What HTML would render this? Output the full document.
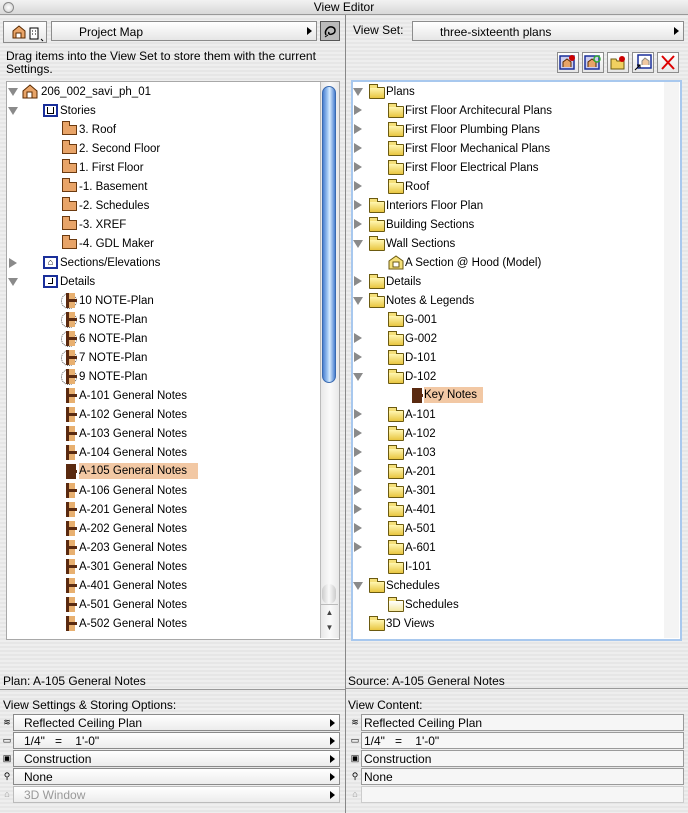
<!DOCTYPE html>
<html><head><meta charset="utf-8"><style>
*{box-sizing:border-box;margin:0;padding:0}
body{width:688px;height:813px;overflow:hidden;position:relative;font-family:"Liberation Sans",sans-serif;font-size:11.5px;color:#000;background:repeating-linear-gradient(#eeeeee 0 2px,#e6e6e6 2px 4px)}
.a{position:absolute}
.title{left:0;top:0;width:688px;height:15px;background:linear-gradient(#f2f2f2,#d8d8d8);border-bottom:1px solid #999;text-align:center;line-height:14px;font-size:12px}
.btn{background:linear-gradient(#fff,#e6e6e6);border:1px solid #8c8c8c}
.tree{background:#fff;border:1px solid #a8a8a8;overflow:hidden}
.r{position:absolute;height:19px;line-height:19px;padding-top:2px;white-space:nowrap}
.tri{position:absolute;width:0;height:0}
.td{border-left:5px solid transparent;border-right:5px solid transparent;border-top:8px solid #8a8a8a;margin-top:1px}
.tr{border-top:5px solid transparent;border-bottom:5px solid transparent;border-left:8px solid #8a8a8a;margin-top:1px}
.fold{position:absolute;width:16px;height:12px;background:linear-gradient(#fff6b0,#e8c640);border:1px solid #6b5a10;border-radius:1px}
.fold:before{content:"";position:absolute;left:-1px;top:-4px;width:7px;height:3px;background:#f5e07a;border:1px solid #6b5a10;border-bottom:none}
.story{position:absolute;width:15px;height:10px;background:#e8a468;border:1px solid #6b3a10;margin-top:1px}
.story:before{content:"";position:absolute;left:-1px;top:-5px;width:6px;height:4px;background:#e8a468;border:1px solid #6b3a10;border-bottom:none}
.det{position:absolute;width:10px;height:15px;border-left:3px solid #5a2a10;background:linear-gradient(90deg,#e8b070 0 6px,transparent 6px);margin-top:1px}
.det:after{content:"";position:absolute;left:0;top:6px;width:8px;height:3px;background:#5a2a10}
.circ{position:absolute;width:16px;height:16px;border:1px dotted #555;border-radius:50%;margin-top:1px}
.sel{background:#f2c8a4;padding-top:0}
.dd{position:absolute;height:17px;border:1px solid #8a8a8a;background:linear-gradient(#fff,#ececec);line-height:17px;padding-left:10px;font-size:12px}
.dd:after{content:"";position:absolute;right:4px;top:4px;border-top:4px solid transparent;border-bottom:4px solid transparent;border-left:5px solid #000}
.ro{position:absolute;height:17px;border:1px solid #9a9a9a;background:#f6f6f6;line-height:17px;padding-left:2px;font-size:12px}
.ic{position:absolute;font-size:9px;width:10px;text-align:center}
</style></head><body>
<div class="a title">View Editor</div>
<div class="a" style="left:3px;top:2px;width:11px;height:11px;border-radius:50%;border:1px solid #888;background:radial-gradient(#fff,#ccc)"></div>
<div class="a" style="left:345px;top:15px;width:1px;height:798px;background:#888"></div>

<div class="a btn" style="left:3px;top:21px;width:44px;height:22px"><svg width="40" height="20"><path d="M9 16V9l6-5 6 5v7z" fill="#e8a468" stroke="#5a2a00"/><rect x="12" y="11" width="5" height="5" fill="#fff" stroke="#5a2a00"/><rect x="26" y="6" width="8" height="11" fill="#fff" stroke="#000"/><path d="M28 9h1M31 9h1M28 12h1M31 12h1" stroke="#000"/><path d="M37 17l2 2" stroke="#000"/></svg></div>
<div class="a btn" style="left:51px;top:21px;width:266px;height:20px;line-height:20px;padding-left:27px;font-size:12px">Project Map<span style="position:absolute;right:4px;top:5px;border-top:4px solid transparent;border-bottom:4px solid transparent;border-left:5px solid #000"></span></div>
<div class="a" style="left:320px;top:21px;width:20px;height:20px;border:1px solid #555;background:#bbb"><svg width="18" height="18"><path d="M5 13c-2-4 2-9 6-8s4 6 0 7c-2 1-4 0-3-2" fill="none" stroke="#000" stroke-width="1.5"/><path d="M4 15l3-2" stroke="#000"/></svg></div>
<div class="a" style="left:6px;top:50px;width:336px;line-height:13px;font-size:12px">Drag items into the View Set to store them with the current Settings.</div>

<div class="a tree" style="left:6px;top:81px;width:334px;height:559px"></div>
<div class="a" style="left:320px;top:82px;width:19px;height:556px;background:repeating-linear-gradient(90deg,#e8e8e8,#fafafa 50%,#e8e8e8);border-left:1px solid #bbb"></div>
<div class="a" style="left:322px;top:86px;width:14px;height:297px;border-radius:7px;background:linear-gradient(90deg,#4a80d0,#a8cdf6 40%,#d8ecff 55%,#4a80d0);border:1px solid #3a6ab0"></div>
<div class="a" style="left:322px;top:584px;width:14px;height:20px;border-radius:7px;background:linear-gradient(90deg,#ccc,#fafafa,#ccc)"></div>
<div class="a" style="left:321px;top:604px;width:17px;height:32px;border-top:1px solid #bbb;font-size:8px;text-align:center;line-height:15px;color:#444">▲<br>▼</div>

<div class="tri td" style="left:8px;top:87px"></div>
<svg class="a" style="left:21px;top:84px" width="18" height="15"><path d="M2 14V7l7-6 7 6v7z" fill="#e8a468" stroke="#5a2a00"/><rect x="6" y="8" width="5" height="6" fill="#fff" stroke="#5a2a00"/></svg>
<div class="r" style="left:41px;top:81px">206_002_savi_ph_01</div>
<div class="tri td" style="left:8px;top:106px"></div>
<div class="a" style="left:43px;top:104px;width:15px;height:13px;border:2px solid #1a2f9a;background:#fff"><div style="position:absolute;left:2px;top:1px;width:7px;height:7px;border:1px solid #000;border-top:none"></div></div>
<div class="r" style="left:60px;top:100px">Stories</div>

<div class="story" style="left:62px;top:124px"></div><div class="r" style="left:79px;top:119px">3. Roof</div>
<div class="story" style="left:62px;top:143px"></div><div class="r" style="left:79px;top:138px">2. Second Floor</div>
<div class="story" style="left:62px;top:162px"></div><div class="r" style="left:79px;top:157px">1. First Floor</div>
<div class="story" style="left:62px;top:181px"></div><div class="r" style="left:79px;top:176px">-1. Basement</div>
<div class="story" style="left:62px;top:200px"></div><div class="r" style="left:79px;top:195px">-2. Schedules</div>
<div class="story" style="left:62px;top:219px"></div><div class="r" style="left:79px;top:214px">-3. XREF</div>
<div class="story" style="left:62px;top:238px"></div><div class="r" style="left:79px;top:233px">-4. GDL Maker</div>

<div class="tri tr" style="left:9px;top:257px"></div>
<div class="a" style="left:43px;top:256px;width:15px;height:13px;border:2px solid #1a2f9a;background:#fff;font-size:9px;line-height:9px;text-align:center">⌂</div>
<div class="r" style="left:60px;top:252px">Sections/Elevations</div>
<div class="tri td" style="left:8px;top:277px"></div>
<div class="a" style="left:43px;top:275px;width:15px;height:13px;border:2px solid #1a2f9a;background:#fff"><div style="position:absolute;left:3px;top:1px;width:5px;height:6px;border:1px solid #000;border-left:none;border-top:none"></div></div>
<div class="r" style="left:60px;top:271px">Details</div>

<div class="circ" style="left:61px;top:292px"></div><div class="det" style="left:66px;top:292px"></div><div class="r" style="left:79px;top:290px">10 NOTE-Plan</div>
<div class="circ" style="left:61px;top:311px"></div><div class="det" style="left:66px;top:311px"></div><div class="r" style="left:79px;top:309px">5 NOTE-Plan</div>
<div class="circ" style="left:61px;top:330px"></div><div class="det" style="left:66px;top:330px"></div><div class="r" style="left:79px;top:328px">6 NOTE-Plan</div>
<div class="circ" style="left:61px;top:349px"></div><div class="det" style="left:66px;top:349px"></div><div class="r" style="left:79px;top:347px">7 NOTE-Plan</div>
<div class="circ" style="left:61px;top:368px"></div><div class="det" style="left:66px;top:368px"></div><div class="r" style="left:79px;top:366px">9 NOTE-Plan</div>

<div class="det" style="left:66px;top:387px"></div><div class="r" style="left:79px;top:385px">A-101 General Notes</div>
<div class="det" style="left:66px;top:406px"></div><div class="r" style="left:79px;top:404px">A-102 General Notes</div>
<div class="det" style="left:66px;top:425px"></div><div class="r" style="left:79px;top:423px">A-103 General Notes</div>
<div class="det" style="left:66px;top:444px"></div><div class="r" style="left:79px;top:442px">A-104 General Notes</div>
<div class="det" style="left:66px;top:463px;background:#5a2a10"></div><div class="r sel" style="left:79px;top:463px;width:119px;height:16px;line-height:16px">A-105 General Notes</div>
<div class="det" style="left:66px;top:482px"></div><div class="r" style="left:79px;top:480px">A-106 General Notes</div>
<div class="det" style="left:66px;top:501px"></div><div class="r" style="left:79px;top:499px">A-201 General Notes</div>
<div class="det" style="left:66px;top:520px"></div><div class="r" style="left:79px;top:518px">A-202 General Notes</div>
<div class="det" style="left:66px;top:539px"></div><div class="r" style="left:79px;top:537px">A-203 General Notes</div>
<div class="det" style="left:66px;top:558px"></div><div class="r" style="left:79px;top:556px">A-301 General Notes</div>
<div class="det" style="left:66px;top:577px"></div><div class="r" style="left:79px;top:575px">A-401 General Notes</div>
<div class="det" style="left:66px;top:596px"></div><div class="r" style="left:79px;top:594px">A-501 General Notes</div>
<div class="det" style="left:66px;top:615px"></div><div class="r" style="left:79px;top:613px">A-502 General Notes</div>
<div class="a" style="left:7px;top:633px;width:312px;height:6px;background:#fff"></div>

<div class="a" style="left:353px;top:23px;font-size:12px">View Set:</div>
<div class="a btn" style="left:412px;top:21px;width:272px;height:20px;line-height:20px;padding-left:27px;font-size:12px">three-sixteenth plans<span style="position:absolute;right:4px;top:5px;border-top:4px solid transparent;border-bottom:4px solid transparent;border-left:5px solid #000"></span></div>
<div class="a btn" style="left:557px;top:52px;width:22px;height:21px"><svg width="20" height="19"><rect x="2" y="3" width="14" height="13" fill="#cce" stroke="#1a2f9a" stroke-width="1.5"/><path d="M5 14V9l4-3 4 3v5" fill="#e8a468" stroke="#5a2a00"/><circle cx="14" cy="5" r="3" fill="#c00"/></svg></div>
<div class="a btn" style="left:582px;top:52px;width:22px;height:21px"><svg width="20" height="19"><rect x="2" y="3" width="14" height="13" fill="#cce" stroke="#1a2f9a" stroke-width="1.5"/><path d="M5 14V9l4-3 4 3v5" fill="#e8a468" stroke="#5a2a00"/><circle cx="14" cy="6" r="3" fill="none" stroke="#3a3" stroke-width="1.5"/></svg></div>
<div class="a btn" style="left:607px;top:52px;width:22px;height:21px"><svg width="20" height="19"><path d="M3 6h5l1 2h7v8H3z" fill="#f0d060" stroke="#6b5a10"/><circle cx="14" cy="6" r="3" fill="#c00"/></svg></div>
<div class="a btn" style="left:632px;top:52px;width:22px;height:21px"><svg width="20" height="19"><rect x="5" y="2" width="13" height="13" fill="#fff" stroke="#1a2f9a" stroke-width="1.5"/><path d="M9 12V8l3-3 4 3v4" fill="#f0c8a0" stroke="#888"/><path d="M2 17l5-5M4 12h3v3" stroke="#000" fill="none"/></svg></div>
<div class="a btn" style="left:657px;top:52px;width:22px;height:21px"><svg width="20" height="19"><path d="M4 3l12 13M16 3L4 16" stroke="#d00" stroke-width="2"/></svg></div>

<div class="a tree" style="left:351px;top:80px;width:331px;height:561px;border:2px solid #a8c8ee"></div>
<div class="a" style="left:664px;top:82px;width:15px;height:556px;background:#f4f4f4"></div>

<div class="tri td" style="left:353px;top:87px"></div><div class="fold" style="left:369px;top:87px"></div><div class="r" style="left:386px;top:81px">Plans</div>
<div class="tri tr" style="left:354px;top:104px"></div><div class="fold" style="left:388px;top:106px"></div><div class="r" style="left:405px;top:100px">First Floor Architecural Plans</div>
<div class="tri tr" style="left:354px;top:123px"></div><div class="fold" style="left:388px;top:125px"></div><div class="r" style="left:405px;top:119px">First Floor Plumbing Plans</div>
<div class="tri tr" style="left:354px;top:142px"></div><div class="fold" style="left:388px;top:144px"></div><div class="r" style="left:405px;top:138px">First Floor Mechanical Plans</div>
<div class="tri tr" style="left:354px;top:161px"></div><div class="fold" style="left:388px;top:163px"></div><div class="r" style="left:405px;top:157px">First Floor Electrical Plans</div>
<div class="tri tr" style="left:354px;top:180px"></div><div class="fold" style="left:388px;top:182px"></div><div class="r" style="left:405px;top:176px">Roof</div>
<div class="tri tr" style="left:354px;top:199px"></div><div class="fold" style="left:369px;top:201px"></div><div class="r" style="left:386px;top:195px">Interiors Floor Plan</div>
<div class="tri tr" style="left:354px;top:218px"></div><div class="fold" style="left:369px;top:220px"></div><div class="r" style="left:386px;top:214px">Building Sections</div>
<div class="tri td" style="left:353px;top:239px"></div><div class="fold" style="left:369px;top:239px"></div><div class="r" style="left:386px;top:233px">Wall Sections</div>
<svg class="a" style="left:388px;top:255px" width="17" height="15"><path d="M1 6l7-5 7 5v8H1z" fill="#f5e07a" stroke="#6b5a10"/><rect x="5" y="7" width="6" height="5" fill="#fff" stroke="#6b5a10"/></svg><div class="r" style="left:405px;top:252px">A Section @ Hood (Model)</div>
<div class="tri tr" style="left:354px;top:275px"></div><div class="fold" style="left:369px;top:277px"></div><div class="r" style="left:386px;top:271px">Details</div>
<div class="tri td" style="left:353px;top:296px"></div><div class="fold" style="left:369px;top:296px"></div><div class="r" style="left:386px;top:290px">Notes &amp; Legends</div>
<div class="fold" style="left:388px;top:315px"></div><div class="r" style="left:405px;top:309px">G-001</div>
<div class="tri tr" style="left:354px;top:332px"></div><div class="fold" style="left:388px;top:334px"></div><div class="r" style="left:405px;top:328px">G-002</div>
<div class="tri tr" style="left:354px;top:351px"></div><div class="fold" style="left:388px;top:353px"></div><div class="r" style="left:405px;top:347px">D-101</div>
<div class="tri td" style="left:353px;top:372px"></div><div class="fold" style="left:388px;top:372px"></div><div class="r" style="left:405px;top:366px">D-102</div>
<div class="det" style="left:412px;top:387px;background:#5a2a10"></div><div class="r sel" style="left:424px;top:387px;width:59px;height:16px;line-height:16px">Key Notes</div>
<div class="tri tr" style="left:354px;top:408px"></div><div class="fold" style="left:388px;top:410px"></div><div class="r" style="left:405px;top:404px">A-101</div>
<div class="tri tr" style="left:354px;top:427px"></div><div class="fold" style="left:388px;top:429px"></div><div class="r" style="left:405px;top:423px">A-102</div>
<div class="tri tr" style="left:354px;top:446px"></div><div class="fold" style="left:388px;top:448px"></div><div class="r" style="left:405px;top:442px">A-103</div>
<div class="tri tr" style="left:354px;top:465px"></div><div class="fold" style="left:388px;top:467px"></div><div class="r" style="left:405px;top:461px">A-201</div>
<div class="tri tr" style="left:354px;top:484px"></div><div class="fold" style="left:388px;top:486px"></div><div class="r" style="left:405px;top:480px">A-301</div>
<div class="tri tr" style="left:354px;top:503px"></div><div class="fold" style="left:388px;top:505px"></div><div class="r" style="left:405px;top:499px">A-401</div>
<div class="tri tr" style="left:354px;top:522px"></div><div class="fold" style="left:388px;top:524px"></div><div class="r" style="left:405px;top:518px">A-501</div>
<div class="tri tr" style="left:354px;top:541px"></div><div class="fold" style="left:388px;top:543px"></div><div class="r" style="left:405px;top:537px">A-601</div>
<div class="fold" style="left:388px;top:562px"></div><div class="r" style="left:405px;top:556px">I-101</div>
<div class="tri td" style="left:353px;top:581px"></div><div class="fold" style="left:369px;top:581px"></div><div class="r" style="left:386px;top:575px">Schedules</div>
<div class="fold" style="left:388px;top:600px;background:linear-gradient(#fff,#f5e8a0)"></div><div class="r" style="left:405px;top:594px">Schedules</div>
<div class="fold" style="left:369px;top:619px"></div><div class="r" style="left:386px;top:613px">3D Views</div>

<div class="a" style="left:3px;top:674px;font-size:12px">Plan: A-105 General Notes</div>
<div class="a" style="left:348px;top:674px;font-size:12px">Source: A-105 General Notes</div>
<div class="a" style="left:0;top:689px;width:345px;height:1px;background:#999"></div>
<div class="a" style="left:346px;top:688px;width:342px;height:1px;background:#999"></div>
<div class="a" style="left:3px;top:698px;font-size:12px">View Settings &amp; Storing Options:</div>
<div class="a" style="left:348px;top:698px;font-size:12px">View Content:</div>

<div class="ic" style="left:2px;top:717px">≋</div><div class="dd" style="left:13px;top:714px;width:327px">Reflected Ceiling Plan</div>
<div class="ic" style="left:2px;top:735px">▭</div><div class="dd" style="left:13px;top:732px;width:327px">1/4"&nbsp;&nbsp;&nbsp;=&nbsp;&nbsp;&nbsp;&nbsp;1'-0"</div>
<div class="ic" style="left:2px;top:753px">▣</div><div class="dd" style="left:13px;top:750px;width:327px">Construction</div>
<div class="ic" style="left:2px;top:771px">⚲</div><div class="dd" style="left:13px;top:768px;width:327px">None</div>
<div class="ic" style="left:2px;top:789px;color:#999">⌂</div><div class="dd" style="left:13px;top:786px;width:327px;color:#999;border-color:#bbb">3D Window</div>

<div class="ic" style="left:350px;top:717px">≋</div><div class="ro" style="left:361px;top:714px;width:323px">Reflected Ceiling Plan</div>
<div class="ic" style="left:350px;top:735px">▭</div><div class="ro" style="left:361px;top:732px;width:323px">1/4"&nbsp;&nbsp;&nbsp;=&nbsp;&nbsp;&nbsp;&nbsp;1'-0"</div>
<div class="ic" style="left:350px;top:753px">▣</div><div class="ro" style="left:361px;top:750px;width:323px">Construction</div>
<div class="ic" style="left:350px;top:771px">⚲</div><div class="ro" style="left:361px;top:768px;width:323px">None</div>
<div class="ic" style="left:350px;top:789px;color:#999">⌂</div><div class="ro" style="left:361px;top:786px;width:323px;border-color:#ccc"></div>
</body></html>
